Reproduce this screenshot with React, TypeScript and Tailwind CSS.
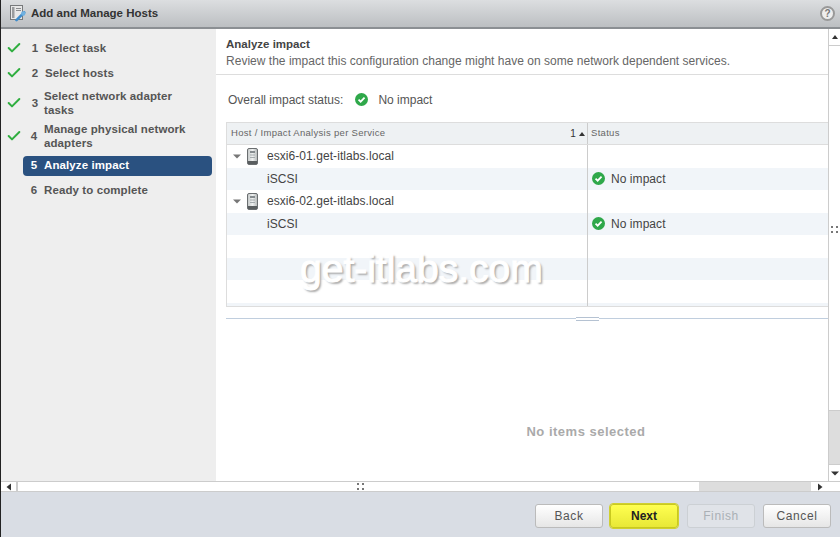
import { Check } from "lucide-react";

const font = { fontFamily: '"Liberation Sans", Arial, sans-serif' };

function ServerIcon() {
  return (
    <svg width="11" height="17" viewBox="0 0 11 17" className="shrink-0">
      <defs>
        <linearGradient id="srv" x1="0" y1="0" x2="1" y2="0">
          <stop offset="0" stopColor="#c4c8c8" />
          <stop offset="0.5" stopColor="#eef0f0" />
          <stop offset="1" stopColor="#b4b8b8" />
        </linearGradient>
      </defs>
      <rect x="0.5" y="0.5" width="10" height="16" rx="1.5" fill="url(#srv)" stroke="#6a6e70" />
      <rect x="3" y="3" width="5" height="2" fill="#858b8e" />
      <rect x="3" y="6.5" width="5" height="1" fill="#a5abae" />
      <rect x="3" y="9" width="5" height="1" fill="#a5abae" />
      <rect x="1" y="13" width="9" height="3" fill="#5a5e60" />
    </svg>
  );
}

function StatusOk({ size = 13 }: { size?: number }) {
  return (
    <svg width={size} height={size} viewBox="0 0 14 14" className="shrink-0">
      <circle cx="7" cy="7" r="7" fill="#2fa84a" />
      <path d="M3.8 7.2 6.1 9.4 10.3 5" fill="none" stroke="#fff" strokeWidth="1.9" />
    </svg>
  );
}

function Triangle({ dir, className, color = "#333" }: { dir: "up" | "down" | "left" | "right"; className?: string; color?: string }) {
  const points = {
    up: "1,6 4,2 7,6",
    down: "0,2.5 8,2.5 4,6.5",
    left: "6,0.5 6,7.5 1.5,4",
    right: "2,0.5 2,7.5 6.5,4",
  }[dir];
  return (
    <svg width="8" height="8" viewBox="0 0 8 8" className={className}>
      <polygon points={points} fill={color} />
    </svg>
  );
}

function GripDots() {
  return (
    <div className="grid grid-cols-2 gap-x-[3px] gap-y-[3px]">
      <span className="h-[2px] w-[2px] bg-[#777]" />
      <span className="h-[2px] w-[2px] bg-[#777]" />
      <span className="h-[2px] w-[2px] bg-[#777]" />
      <span className="h-[2px] w-[2px] bg-[#777]" />
    </div>
  );
}

function Step({ n, lines, done, active, numClass, textClass, className }: {
  n: number;
  lines: string[];
  done?: boolean;
  active?: boolean;
  numClass?: string;
  textClass?: string;
  className?: string;
}) {
  return (
    <div className={`flex items-center ${className ?? ""}`}>
      <div className="flex w-[22px] shrink-0 justify-center">
        {done ? <Check size={16} strokeWidth={3} className="ml-[3px] -mt-[2px] text-[#2fae3f]" /> : null}
      </div>
      <div
        className={`flex flex-1 items-center rounded-[4px] text-[11.5px] font-bold leading-[13.5px] tracking-[0.1px] ${
          active ? "h-[20px] bg-[#2a5180] text-white" : "text-[#555]"
        }`}
      >
        <span className={`w-[21px] shrink-0 text-center ${numClass ?? ""}`}>{n}</span>
        <div className={textClass}>
          {lines.map((l) => (
            <div key={l}>{l}</div>
          ))}
        </div>
      </div>
    </div>
  );
}

function Row({ tint, left, right, indent }: { tint?: boolean; left?: React.ReactNode; right?: React.ReactNode; indent?: boolean }) {
  return (
    <div className={`flex h-[22.5px] items-center text-[12px] tracking-[0.06px] text-[#444] ${tint ? "bg-[#f1f5f9]" : "bg-white"}`}>
      <div className={`flex h-full w-[361px] shrink-0 items-center border-r border-[#ccc] ${indent ? "pl-[40px]" : "pl-[6px]"}`}>{left}</div>
      <div className="flex flex-1 items-center gap-[6px] pl-[4px]">{right}</div>
    </div>
  );
}

function HostLabel({ name }: { name: string }) {
  return (
    <div className="flex items-center">
      <Triangle dir="down" className="mr-[6px]" color="#777" />
      <ServerIcon />
      <span className="ml-[9px]">{name}</span>
    </div>
  );
}

function FooterButton({ label, variant, className }: { label: string; variant?: "primary" | "disabled"; className?: string }) {
  const cls =
    variant === "primary"
      ? "border-[#c9c91f] bg-gradient-to-b from-[#ffff50] to-[#e8e836] font-bold text-[#222] outline outline-1 outline-[#d0d030] tracking-normal"
      : variant === "disabled"
        ? "border-[#ccd0d4] bg-[#e0e3e8] text-[#aab0b5]"
        : "border-[#bbb] bg-gradient-to-b from-white to-[#e6e6e6] text-[#555]";
  return (
    <div className={`flex h-[24px] w-[68px] items-center justify-center rounded-[3px] border text-[12px] tracking-[0.6px] ${cls} ${className ?? ""}`}>
      {label}
    </div>
  );
}

export default function App() {
  return (
    <div style={font} className="relative flex h-[537px] w-[840px] flex-col overflow-hidden border-l border-[#222] bg-[#d9dde4]">
      {/* title bar */}
      <div className="flex h-[29px] shrink-0 items-center justify-between border-b-2 border-[#8b8f93] bg-gradient-to-b from-[#dcdee0] to-[#bcbfc2] pl-[9px] pr-[5px]">
        <div className="flex items-center gap-[5px]">
          <svg width="16" height="17" viewBox="0 0 16 17">
            <rect x="0.5" y="0.5" width="12" height="14" fill="#e8e8e8" stroke="#77797b" />
            <rect x="2" y="2" width="2.5" height="11" fill="#9a9c9e" />
            <rect x="6" y="3" width="5" height="1" fill="#8a8c8e" />
            <rect x="6" y="5" width="5" height="1" fill="#8a8c8e" />
            <path d="M14.2 7.5 6.5 15.2" stroke="#3f8ccb" strokeWidth="2.6" strokeLinecap="round" />
            <circle cx="13.2" cy="8.5" r="2.2" fill="#6fb0e0" />
          </svg>
          <span className="text-[11.5px] font-bold text-[#333]">Add and Manage Hosts</span>
        </div>
        <div className="flex h-[15px] w-[15px] items-center justify-center rounded-full border-2 border-[#999] bg-[#eee] text-[10px] font-bold leading-none text-[#777]">?</div>
      </div>

      {/* body */}
      <div className="flex h-[452px] shrink-0">
        <div className="flex w-[215px] shrink-0 flex-col bg-[#eeeeee] pr-[4px] pt-[13px]">
          <Step n={1} lines={["Select task"]} done numClass="pl-[3px]" textClass="pl-[1px]" className="h-[14px]" />
          <Step n={2} lines={["Select hosts"]} done numClass="pl-[3px]" textClass="pl-[1px]" className="mt-[11px] h-[14px]" />
          <Step n={3} lines={["Select network adapter", "tasks"]} done numClass="pl-[3px]" className="mt-[9px] h-[27px]" />
          <Step n={4} lines={["Manage physical network", "adapters"]} done numClass="pl-[1px]" className="mt-[6px] h-[27px]" />
          <Step n={5} lines={["Analyze impact"]} active numClass="pl-[1px]" className="mt-[6px] h-[20px]" />
          <Step n={6} lines={["Ready to complete"]} numClass="pl-[1px]" className="mt-[5px] h-[20px]" />
        </div>

        <div className="flex flex-1 flex-col bg-white">
          <div className="mx-0 flex h-[46px] shrink-0 flex-col border-b border-[#ddd] pl-[10px] pt-[8px]">
            <div className="text-[11.5px] font-bold leading-[14px] text-[#444]">Analyze impact</div>
            <div className="mt-[3px] text-[12px] leading-[14px] tracking-[0.02px] text-[#666]">
              Review the impact this configuration change might have on some network dependent services.
            </div>
          </div>

          <div className="flex h-[47px] shrink-0 items-center pb-[6px] pl-[12px] pt-[8px] text-[12px] text-[#555]">
            <span>Overall impact status:</span>
            <span className="ml-[12px] mr-[10px]"><StatusOk /></span>
            <span>No impact</span>
          </div>

          <div className="ml-[10px] flex h-[185px] shrink-0 flex-col border border-[#ddd] border-r-0">
            <div className="flex h-[22px] shrink-0 border-b border-[#ddd] bg-[#eef1f3] text-[9.5px] tracking-[0.3px] text-[#666]">
              <div className="flex w-[361px] shrink-0 items-center justify-between border-r border-[#ccc] pl-[4px] pr-[1px]">
                <span>Host / Impact Analysis per Service</span>
                <span className="flex items-center gap-[2px] text-[10px] text-[#333]">1 <Triangle dir="up" /></span>
              </div>
              <div className="flex items-center pl-[3px]">Status</div>
            </div>
            <Row left={<HostLabel name="esxi6-01.get-itlabs.local" />} />
            <Row tint indent left="iSCSI" right={<><StatusOk /><span>No impact</span></>} />
            <Row left={<HostLabel name="esxi6-02.get-itlabs.local" />} />
            <Row tint indent left="iSCSI" right={<><StatusOk /><span>No impact</span></>} />
            <Row />
            <Row tint />
            <Row />
            <div className="flex flex-1 bg-[#f1f5f9]">
              <div className="w-[361px] shrink-0 border-r border-[#ccc]" />
            </div>
          </div>

          {/* splitter */}
          <div className="relative ml-[10px] mt-[11px] h-px shrink-0 bg-[#c0cede]">
            <div className="absolute left-[350px] top-[-2px] flex h-[6px] w-[23px] flex-col justify-between bg-white py-[1px]">
              <span className="h-px bg-[#b5c2d2]" />
              <span className="h-px bg-[#b5c2d2]" />
            </div>
          </div>

          <div className="flex flex-1 items-center justify-center pl-[128px] pt-[63px] text-[13px] font-bold tracking-[0.5px] text-[#aaaaaa]">
            No items selected
          </div>
        </div>

        {/* vertical scrollbar */}
        <div className="flex w-[12px] shrink-0 flex-col border-l border-[#ccc] bg-white">
          <div className="flex h-[17px] shrink-0 items-center justify-center border-b border-[#ccc]"><Triangle dir="up" /></div>
          <div className="flex-1" />
          <div className="h-[54px] shrink-0 border-t border-[#ccc] bg-[#dddddd]" />
          <div className="flex h-[17px] shrink-0 items-center justify-center border-t border-[#ccc]"><Triangle dir="down" /></div>
        </div>
      </div>

      {/* horizontal scrollbar */}
      <div className="flex h-[11px] shrink-0 items-stretch border-y border-[#ccc] bg-white">
        <div className="flex w-[17px] shrink-0 items-center justify-center border-r-2 border-[#ccc]"><Triangle dir="left" /></div>
        <div className="flex w-[681px] shrink-0 items-center justify-center pl-[3px]"><GripDots /></div>
        <div className="w-[112px] shrink-0 bg-[#dddddd]" />
        <div className="flex w-[17px] shrink-0 items-center justify-center"><Triangle dir="right" /></div>
      </div>

      {/* footer */}
      <div className="flex flex-1 items-start justify-end pr-[9px] pt-[12px]">
        <FooterButton label="Back" />
        <FooterButton label="Next" variant="primary" className="ml-[7px]" />
        <FooterButton label="Finish" variant="disabled" className="ml-[9px]" />
        <FooterButton label="Cancel" className="ml-[8px]" />
      </div>

      {/* watermark and the scrollbar grip lie over the panels */}
      <div className="absolute left-[299px] top-[245px] text-[39px] leading-[48px] text-white [-webkit-text-stroke:1px_white] [text-shadow:2px_2px_2px_#aaa]">
        get-itlabs.com
      </div>
      <div className="absolute left-[830px] top-[226px]"><GripDots /></div>
    </div>
  );
}
